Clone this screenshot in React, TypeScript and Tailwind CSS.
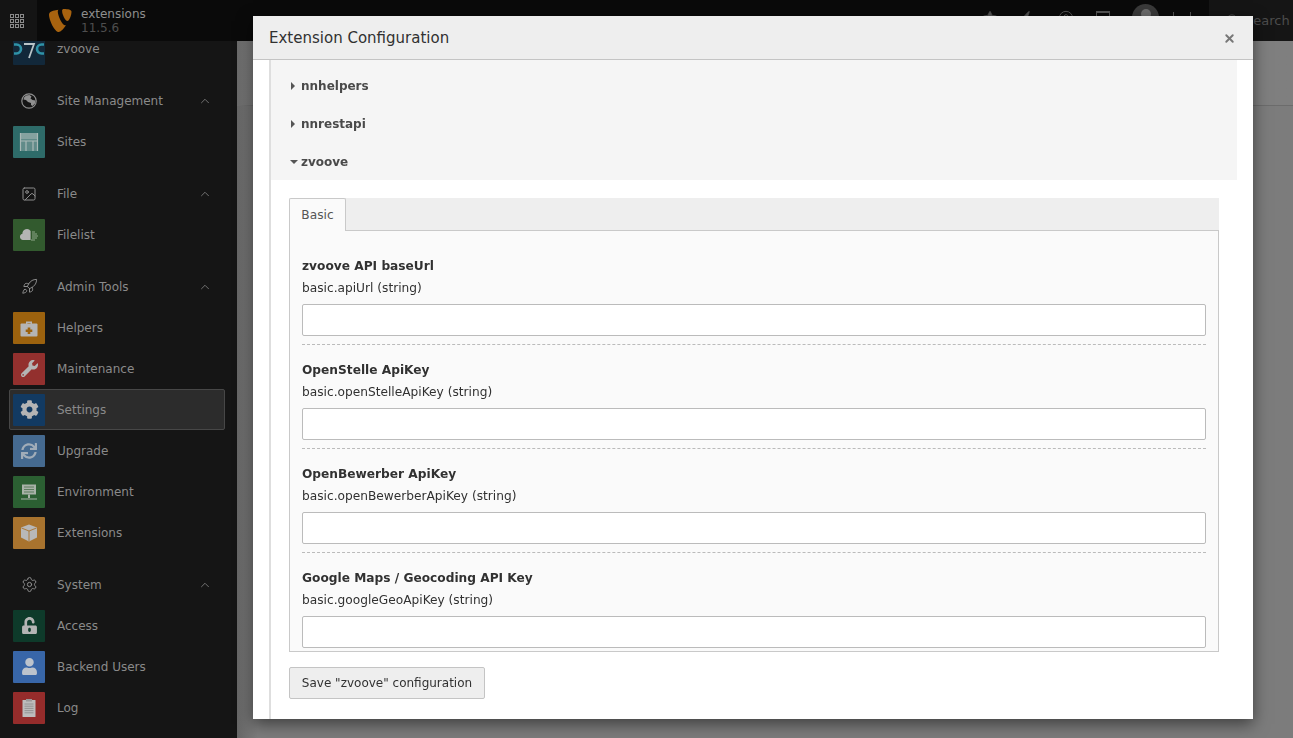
import { ChevronUp, CircleHelp, Image, Rocket, Search, Settings, Star, Zap, X } from "lucide-react"
import { FaCog, FaSync, FaUnlockAlt, FaUser, FaWrench } from "react-icons/fa"
import { ReactNode } from "react"

const font = "font-['DejaVu_Sans','Liberation_Sans',sans-serif]"

function Globe() {
  return (
    <svg viewBox="0 0 16 16" className="h-[16px] w-[16px]" fill="none">
      <circle cx="8" cy="8" r="7.2" stroke="#8f8f8f" strokeWidth="1.2" />
      <path d="M5 2.5 8.5 2l2 1.5-1 2 2 1.5 3 .5-.5 3-2.5 2.5-1.5-1V10L7 9 5 7 2.5 6.5 3 4.5z" fill="#8f8f8f" />
    </svg>
  )
}

function SitesIcon() {
  return (
    <svg viewBox="0 0 20 20" className="h-[20px] w-[20px]" fill="none">
      <rect x="1.500" y="1" width="17" height="18" fill="#9fb3b1" opacity="0.45" />
      <path d="M1.500 2h17M1.500 4h17M1.500 6h17" stroke="#a9b9b7" strokeWidth="1.200" />
      <path d="M1.500 9h17M7 9v10M14 9v10M1.500 1v18M18.500 1v18" stroke="#a9b9b7" strokeWidth="1.200" />
    </svg>
  )
}

function CloudIcon() {
  return (
    <svg viewBox="0 0 20 20" className="h-[20px] w-[20px]">
      <path d="M4 15a3.200 3.200 0 0 1-.6-6.300A4.500 4.500 0 0 1 11.600 6v9z" fill="#b4b4b4" />
      <path d="M13 7h3M13 9h5M13 11h6M13 13h5M12 15h4" stroke="#8fa88a" strokeWidth="1" />
    </svg>
  )
}

function CaseIcon() {
  return (
    <svg viewBox="0 0 20 20" className="h-[20px] w-[20px]">
      <path d="M7 3.500h6V6h-1.400V5H8.400v1H7z" fill="#b4b4b4" />
      <rect x="1.500" y="5.500" width="17" height="13" rx="1" fill="#b4b4b4" />
      <path d="M8.700 9.500h2.600v2h2v2.400h-2v2H8.700v-2h-2v-2.400h2z" fill="#9c620e" />
    </svg>
  )
}

function EnvIcon() {
  return (
    <svg viewBox="0 0 20 20" className="h-[20px] w-[20px]">
      <rect x="3" y="2.500" width="14" height="10" fill="#a8b2a8" />
      <path d="M5 5h10M5 7.500h10M5 10h10" stroke="#47704a" strokeWidth="0.800" />
      <path d="M9 12.500h2V16H9zM2 16.500h16v1H2z" fill="#a8b2a8" />
    </svg>
  )
}

function CubeIcon() {
  return (
    <svg viewBox="0 0 20 20" className="h-[20px] w-[20px]">
      <path d="M10 1.500 18 4.500v10l-8 4-8-4v-10z" fill="#b8b8b8" />
      <path d="M2.500 5 10 8l7.500-3M10 8v10" stroke="#a8732e" strokeWidth="0.900" fill="none" />
    </svg>
  )
}

function LogIcon() {
  return (
    <svg viewBox="0 0 20 20" className="h-[20px] w-[20px]">
      <rect x="3.500" y="2" width="13" height="17" rx="0.500" fill="#bcbcbc" />
      <rect x="7" y="1" width="6" height="2.500" fill="#9a9a9a" />
      <path d="M5.500 6h9M5.500 8.200h9M5.500 10.400h9M5.500 12.600h9M5.500 14.800h9" stroke="#8f8f8f" strokeWidth="0.900" />
    </svg>
  )
}

function ZvooveIcon() {
  return (
    <svg viewBox="0 0 32 32" className="h-[32px] w-[32px]" fill="none">
      <path d="M1 11.500h2.500a4.500 4.500 0 0 1 0 9H1" stroke="#2f93a8" strokeWidth="2.600" />
      <path d="M11 11h10l-5 14" stroke="#b9c4c8" strokeWidth="1.800" />
      <path d="M31 11.500h-2.500a4.500 4.500 0 0 0 0 9H31" stroke="#2f93a8" strokeWidth="2.600" />
    </svg>
  )
}

function Typo3Logo() {
  return (
    <svg viewBox="0 0 24 24" className="h-[24px] w-[24px]">
      <path d="M18 16c-.4.1-.7.2-1.100.2-2.900 0-7.100-10.100-7.100-13.500 0-1.200.3-1.700.7-2C6.900 1 2.800 2.200 1.500 3.900c-.3.400-.5 1-.5 1.800C1 11 6.700 23 10.700 23c1.900 0 5-3 7.300-7z" fill="#a8630f" />
      <path d="M16.100 0c3.700 0 7.400.6 7.400 2.700 0 4.200-2.700 9.300-4 9.300-2.400 0-5.400-6.700-5.400-10 0-1.500.6-2 2-2z" fill="#a8630f" />
    </svg>
  )
}

function ModuleItem({ name, color, icon, active }: { name: string; color: string; icon: ReactNode; active?: boolean }) {
  return (
    <div
      className={
        active
          ? "ml-[9px] mr-[12px] flex h-[41px] items-center rounded-[2px] border border-[#474747] bg-[#2c2c2c] pl-[3px]"
          : "ml-[9px] mr-[12px] flex h-[41px] items-center pl-[4px]"
      }
    >
      <div className={`flex h-[32px] w-[32px] items-center justify-center rounded-[1px] ${color}`}>{icon}</div>
      <span className="ml-[12px] text-[12px] text-[#8a8a8a]">{name}</span>
    </div>
  )
}

function SectionHead({ name, icon }: { name: string; icon: ReactNode }) {
  return (
    <div className="mt-[11px] flex h-[41px] items-center pl-[13px]">
      <div className="flex w-[32px] justify-center text-[#8f8f8f]">{icon}</div>
      <span className="ml-[12px] flex-1 text-[12px] text-[#8a8a8a]">{name}</span>
      <ChevronUp className="mr-[25px] h-[14px] w-[14px] text-[#7d7d7d]" strokeWidth={1.5} />
    </div>
  )
}

function Sidebar() {
  return (
    <aside className="h-full w-[237px] shrink-0 overflow-hidden bg-[#151515]">
      <div className="-mt-[13px]">
        <ModuleItem name="zvoove" color="bg-[#12283a]" icon={<ZvooveIcon />} />
        <SectionHead name="Site Management" icon={<Globe />} />
        <ModuleItem name="Sites" color="bg-[#2e6b69]" icon={<SitesIcon />} />
        <SectionHead name="File" icon={<Image className="h-[16px] w-[16px]" strokeWidth={1.5} />} />
        <ModuleItem name="Filelist" color="bg-[#325a2e]" icon={<CloudIcon />} />
        <SectionHead name="Admin Tools" icon={<Rocket className="h-[17px] w-[17px]" strokeWidth={1.4} />} />
        <ModuleItem name="Helpers" color="bg-[#9c620e]" icon={<CaseIcon />} />
        <ModuleItem name="Maintenance" color="bg-[#93302e]" icon={<FaWrench className="h-[17px] w-[17px] text-[#b4b4b4]" />} />
        <ModuleItem name="Settings" color="bg-[#123a62]" icon={<FaCog className="h-[19px] w-[19px] text-[#b4b4b4]" />} active />
        <ModuleItem name="Upgrade" color="bg-[#456a90]" icon={<FaSync className="h-[16px] w-[16px] text-[#a0acb8]" />} />
        <ModuleItem name="Environment" color="bg-[#2b5f32]" icon={<EnvIcon />} />
        <ModuleItem name="Extensions" color="bg-[#a8732e]" icon={<CubeIcon />} />
        <SectionHead name="System" icon={<Settings className="h-[17px] w-[17px]" strokeWidth={1.4} />} />
        <ModuleItem name="Access" color="bg-[#0e3a2a]" icon={<FaUnlockAlt className="h-[17px] w-[17px] text-[#b4b4b4]" />} />
        <ModuleItem name="Backend Users" color="bg-[#3866a8]" icon={<FaUser className="h-[17px] w-[17px] text-[#bcc3cc]" />} />
        <ModuleItem name="Log" color="bg-[#952c2b]" icon={<LogIcon />} />
      </div>
    </aside>
  )
}

function Topbar() {
  return (
    <header className="relative z-10 flex h-[41px] shrink-0 items-center bg-[#0a0a0a]">
      <div className="flex h-full w-[37px] items-center bg-[#141414] pl-[10px]">
        <div className="grid grid-cols-3 gap-[1px]">
          {Array.from({ length: 9 }).map((_, i) => (
            <span key={i} className="h-[4px] w-[4px] border border-[#8a8a8a]" />
          ))}
        </div>
      </div>
      <div className="ml-[11px]">
        <Typo3Logo />
      </div>
      <div className="ml-[9px] leading-none">
        <div className="text-[12px] leading-[14px] text-[#8e8e8e]">extensions</div>
        <div className="text-[12px] leading-[14px] text-[#4e4e4e]">11.5.6</div>
      </div>
      <div className="ml-auto flex h-full items-start">
        <div className="mt-[10px] flex items-start text-[#555]">
          <Star className="h-[16px] w-[16px]" fill="#555" strokeWidth={1} />
          <Zap className="ml-[22px] h-[16px] w-[16px]" fill="#555" strokeWidth={1} />
          <CircleHelp className="ml-[22px] h-[16px] w-[16px]" strokeWidth={1.5} />
          <span className="ml-[22px] mt-[1px] h-[14px] w-[14px] border border-t-2 border-[#555]" />
        </div>
        <span className="ml-[22px] mt-[4px] flex h-[27px] w-[27px] justify-center rounded-full bg-[#3a3a3a] pt-[5px]">
          <span className="h-[10px] w-[10px] rounded-full bg-[#6c6c6c]" />
        </span>
        <span className="ml-[14px] mt-[12px] h-[6px] w-[1px] bg-[#555]" />
        <span className="ml-[16px] mt-[12px] h-[6px] w-[1px] bg-[#555]" />
        <div className="ml-[18px] flex h-full w-[84px] items-center bg-[#151515] pl-[16px] text-[13px] text-[#4c4c4c]">
          <Search className="mr-[5px] h-[15px] w-[15px]" strokeWidth={1.5} />
          Search
        </div>
      </div>
    </header>
  )
}

function Field({ label, hint, last }: { label: string; hint: string; last?: boolean }) {
  return (
    <div className={last ? "" : "h-[104px]"}>
      <div className="pt-[8px] text-[12.2px] font-bold leading-[22px] text-[#313131]">{label}</div>
      <div className="text-[12.2px] leading-[22px] text-[#313131]">{hint}</div>
      <div className="mt-[5px] h-[32px] rounded-[2px] border border-[#bbb] bg-white" />
      {!last && <div className="mt-[8px] border-b border-dashed border-[#bbb]" />}
    </div>
  )
}

function Row({ name, open }: { name: string; open?: boolean }) {
  return (
    <div className="flex h-[38px] items-center pl-[19px]">
      <span
        className={
          open
            ? "mr-[3px] h-0 w-0 border-x-[4px] border-t-[4px] border-x-transparent border-t-[#555]"
            : "ml-[1px] mr-[6px] h-0 w-0 border-y-[4px] border-l-[4px] border-y-transparent border-l-[#555]"
        }
      />
      <span className="text-[12px] font-bold text-[#4a4a4a]">{name}</span>
    </div>
  )
}

function Modal() {
  return (
    <div className="fixed inset-0 z-20">
      <div className="absolute left-[253px] top-[16px] flex h-[703px] w-[1000px] flex-col overflow-hidden bg-white shadow-[0_5px_15px_rgba(0,0,0,0.5)]">
        <div className="flex h-[44px] shrink-0 items-center justify-between border-b border-[#c4c4c4] bg-[#eeeeee] pl-[16px] pr-[17px] pt-[1px]">
          <span className="text-[15px] text-[#313131]">Extension Configuration</span>
          <X className="h-[13px] w-[13px] text-[#777]" strokeWidth={3.5} />
        </div>
        <div className="ml-[16px] mr-[16px] flex-1 border-l-2 border-[#dedede]">
          <div className="h-[120px] overflow-hidden bg-[#f5f5f5] pt-[7px]">
            <Row name="nnhelpers" />
            <Row name="nnrestapi" />
            <Row name="zvoove" open />
          </div>
          <div className="pl-[18px] pr-[18px] pt-[18px]">
            <div className="flex h-[32px] bg-[#eeeeee]">
              <div className="relative z-10 flex h-[33px] w-[57px] items-center justify-center rounded-t-[2px] border border-b-0 border-[#c9c9c9] bg-[#fafafa] text-[12.2px] text-[#555]">
                Basic
              </div>
            </div>
            <div className="h-[422px] border border-[#c9c9c9] bg-[#fafafa] px-[12px] pt-[16px]">
              <Field label="zvoove API baseUrl" hint="basic.apiUrl (string)" />
              <Field label="OpenStelle ApiKey" hint="basic.openStelleApiKey (string)" />
              <Field label="OpenBewerber ApiKey" hint="basic.openBewerberApiKey (string)" />
              <Field label="Google Maps / Geocoding API Key" hint="basic.googleGeoApiKey (string)" last />
            </div>
            <button className="mt-[15px] h-[32px] w-[196px] rounded-[2px] border border-[#c4c4c4] bg-[#eeeeee] text-[12px] text-[#313131]">
              Save "zvoove" configuration
            </button>
          </div>
        </div>
      </div>
    </div>
  )
}

export default function App() {
  return (
    <div className={`flex h-[738px] w-[1293px] flex-col overflow-hidden ${font}`}>
      <Topbar />
      <div className="flex min-h-0 flex-1">
        <Sidebar />
        <main className="flex-1 bg-[#7c7c7c] bg-gradient-to-r from-[#666666] from-0% to-[#7c7c7c] to-[2%]">
          <div className="h-[65px] border-b border-[#6c6c6c] bg-gradient-to-r from-[#6a6a6a] to-[#7f7f7f] to-[2%]" />
        </main>
      </div>
      <Modal />
    </div>
  )
}
